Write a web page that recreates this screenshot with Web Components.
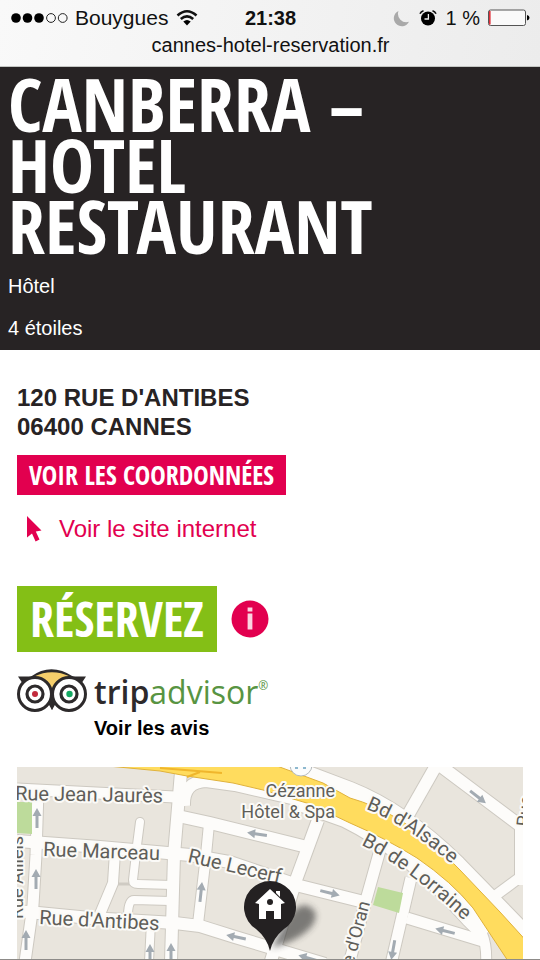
<!DOCTYPE html>
<html lang="fr">
<head>
<meta charset="utf-8">
<meta name="viewport" content="width=device-width, initial-scale=1">
<title>Canberra - Hotel Restaurant</title>
<style>
  :root {
    --dark: #272324;
    --pink: #e2004f;
    --green: #84bf16;
    --condensed: 'Open Sans Condensed', 'Liberation Sans Narrow', sans-serif;
  }

  body {
    margin: 0;
    background: #fff;
    color: var(--dark);
    font-family: 'Liberation Sans', Arial, sans-serif;
  }
</style>
</head>
<body>
<hotel-page>
  <status-bar slot="status" carrier="Bouygues" time="21:38" battery="1 %">cannes-hotel-reservation.fr</status-bar>
  <hotel-header slot="header">
    Canberra – Hotel Restaurant
    <span slot="type">Hôtel</span>
    <span slot="stars">4 étoiles</span>
  </hotel-header>
  <hotel-contact>
    <span slot="street">120 rue d'Antibes</span>
    <span slot="city">06400 Cannes</span>
  </hotel-contact>
  <hotel-booking>Réservez</hotel-booking>
  <trip-advisor>Voir les avis</trip-advisor>
  <hotel-map slot="map"></hotel-map>
</hotel-page>

<script>
class BaseElement extends HTMLElement {
  constructor() {
    super();
    this.attachShadow({ mode: 'open' });
  }

  connectedCallback() {
    this.shadowRoot.innerHTML = this.render();
  }
}

class HotelPage extends BaseElement {
  render() {
    return `
      <style>
        :host {
          display: flex;
          flex-direction: column;
          box-sizing: border-box;
          min-height: 100vh;
          border-bottom: 1px solid #8d8b88;
        }

        main {
          flex: 1;
          display: flex;
          flex-direction: column;
          padding: 33px 17px 0;
        }
      </style>
      <slot name="status"></slot>
      <slot name="header"></slot>
      <main>
        <slot></slot>
        <slot name="map"></slot>
      </main>
    `;
  }
}

class StatusBar extends BaseElement {
  render() {
    return `
      <style>
        :host {
          display: block;
          height: 67px;
          box-sizing: border-box;
          padding: 6px 10px 0 11px;
          border-bottom: 1px solid #c4c6c3;
          background: linear-gradient(100deg, #f9f9f9, #ececec);
          color: #111;
          font-size: 20px;
          line-height: 24px;
        }

        .row {
          display: grid;
          grid-template-columns: 1fr auto 1fr;
          align-items: center;
        }

        .left, .right {
          display: flex;
          align-items: center;
          gap: 8px;
        }

        .left { font-size: 21px; gap: 7px; }
        .right { justify-content: flex-end; }
        .url { text-align: center; padding-top: 3px; }
        svg { display: block; flex: none; }
      </style>
      <div class="row">
        <div class="left">
          <svg width="57" height="12" viewBox="0 0 57 12">
            <circle cx="5" cy="6" r="4.8"/><circle cx="16.5" cy="6" r="4.8"/><circle cx="28" cy="6" r="4.8"/>
            <g fill="none" stroke="#222"><circle cx="40" cy="6" r="4.4"/><circle cx="51.7" cy="6" r="4.4"/></g>
          </svg>
          <span>${this.getAttribute('carrier')}</span>
          <svg width="24" height="18" viewBox="0 0 24 18">
            <g fill="none" stroke="#111" stroke-width="2.6">
              <path d="M2.5 6.5 Q12 -2 21.5 6.5"/>
              <path d="M5.8 10 Q12 4.6 18.2 10"/>
            </g>
            <path d="M8.3 12.5 Q12 9.5 15.7 12.5 L12 16.5 Z"/>
          </svg>
        </div>
        <strong>${this.getAttribute('time')}</strong>
        <div class="right">
          <svg width="17" height="17" viewBox="0 0 17 17">
            <path d="M5.5 1 A8 8 0 1 0 16 11.8 A8.4 8.4 0 0 1 5.5 1 Z" fill="#a9a9a9"/>
          </svg>
          <svg width="20" height="18" viewBox="0 0 20 18">
            <circle cx="10" cy="9.5" r="7"/>
            <path d="M2 4.8 Q3 2.5 5.5 1.7 M18 4.8 Q17 2.5 14.5 1.7" fill="none" stroke="#111" stroke-width="1.6"/>
            <path d="M10.4 5 V10 H6.5" fill="none" stroke="#eee" stroke-width="1.3"/>
          </svg>
          <span>${this.getAttribute('battery')}</span>
          <svg width="42" height="18" viewBox="0 0 42 18">
            <rect x="0.5" y="1" width="37" height="15.5" rx="2" fill="#fafafa" stroke="#555"/>
            <rect x="1" y="2" width="1.6" height="13.5" fill="#e0303a"/>
            <path d="M39 6 Q41.5 6.5 41.5 8.8 Q41.5 11 39 11.5 Z"/>
          </svg>
        </div>
      </div>
      <div class="url"><slot></slot></div>
    `;
  }
}

class HotelHeader extends BaseElement {
  render() {
    return `
      <style>
        :host {
          display: block;
          padding: 6px 8px 1px;
          background: var(--dark);
          color: #fff;
        }

        h1 {
          max-width: 420px;
          margin: 0 0 9px;
          font-family: var(--condensed);
          font-size: 74px;
          font-weight: 700;
          line-height: 61px;
          text-transform: uppercase;
        }

        p {
          margin: 0;
          padding: 9px 0;
          font-size: 20px;
          line-height: 24px;
        }
      </style>
      <h1><slot></slot></h1>
      <p><slot name="type"></slot></p>
      <p><slot name="stars"></slot></p>
    `;
  }
}

class HotelContact extends BaseElement {
  render() {
    return `
      <style>
        :host { display: block; }

        address {
          font-size: 24px;
          font-style: normal;
          font-weight: 700;
          line-height: 29px;
          text-transform: uppercase;
        }

        address ::slotted(span) { display: block; }

        button {
          display: block;
          margin: 14px 0 18px;
          padding: 0 12px;
          border: 0;
          background: var(--pink);
          color: #fff;
          font-family: var(--condensed);
          font-size: 26px;
          font-weight: 700;
          line-height: 40px;
          text-transform: uppercase;
        }

        a {
          display: flex;
          align-items: center;
          gap: 16px;
          padding-left: 8px;
          color: var(--pink);
          font-size: 24px;
          line-height: 32px;
          text-decoration: none;
        }
      </style>
      <address><slot name="street"></slot><slot name="city"></slot></address>
      <button type="button">Voir les coordonnées</button>
      <a href="#site">
        <svg width="18" height="28" viewBox="0 0 18 28">
          <path d="M2 1 L16.5 15.5 L10.8 16.5 L14.5 24.5 L10.6 26.5 L7 18.5 L2 22.5 Z" fill="currentColor"/>
        </svg>
        Voir le site internet
      </a>
    `;
  }
}

class HotelBooking extends BaseElement {
  render() {
    return `
      <style>
        :host {
          display: flex;
          align-items: center;
          gap: 14px;
          padding: 41px 0 16px;
        }

        button {
          padding: 0;
          border: 0;
          background: none;
          color: #fff;
        }

        .book {
          padding: 0 13px;
          background: var(--green);
          font-family: var(--condensed);
          font-size: 48px;
          font-weight: 700;
          line-height: 66px;
          text-transform: uppercase;
        }

        svg { display: block; }
      </style>
      <button class="book" type="button"><slot></slot></button>
      <button type="button" aria-label="Informations">
        <svg width="38" height="38" viewBox="0 0 38 38">
          <circle cx="19" cy="19" r="18.5" fill="#e2004f"/>
          <path d="M16.6 7.5 h4.8 v4 h-4.8 Z M16.6 13.5 h4.8 v16 h-4.8 Z" fill="#fbd3e0"/>
        </svg>
      </button>
    `;
  }
}

class TripAdvisor extends BaseElement {
  render() {
    return `
      <style>
        :host {
          display: block;
          padding-bottom: 26px;
        }

        a {
          display: grid;
          grid-template-columns: 70px auto;
          justify-content: start;
          column-gap: 7px;
          color: #000;
          text-decoration: none;
        }

        svg { display: block; margin-top: 1px; }

        .logo {
          display: flex;
          color: #2d2a2b;
          font-family: 'Open Sans', sans-serif;
          font-size: 32px;
          line-height: 47px;
        }

        .logo span { font-weight: 600; }
        .logo b { color: #589442; font-weight: 500; }
        .logo small { color: #589442; font-size: 12px; line-height: 36px; }

        strong {
          grid-column: 2;
          font-size: 20px;
          line-height: 26px;
        }
      </style>
      <a href="#avis">
        <svg width="70" height="45" viewBox="0 0 70 45">
          <path d="M1 7.5 H14 Q34 -7 56 7.5 H69 L64 15 L54 30 L38 34 L35 41 L32 34 L18 32 L6 15 Z" fill="#2d2a2b"/>
          <path d="M17 7.5 Q35 -1 53 7.5 Q40 10 35 21 Q30 10 17 7.5 Z" fill="#f6cf6b"/>
          <g fill="#fff" stroke="#2d2a2b" stroke-width="3">
            <circle cx="18" cy="25" r="16.5"/><circle cx="52" cy="25" r="16.5"/>
          </g>
          <g fill="#fff" stroke="#2d2a2b" stroke-width="3.2">
            <circle cx="18" cy="25" r="8"/><circle cx="52" cy="25" r="8"/>
          </g>
          <path d="M31 34 L35 41 L39 34 L35 28 Z" fill="#2d2a2b"/>
          <circle cx="18" cy="25" r="3" fill="#c22a3c"/>
          <circle cx="52.5" cy="25" r="3.2" fill="#14a862"/>
        </svg>
        <span class="logo"><span>trip</span><b>advisor</b><small>®</small></span>
        <strong><slot></slot></strong>
      </a>
    `;
  }
}

class HotelMap extends BaseElement {
  render() {
    // streets are drawn twice: grey edge first, then the road surface
    const streets = `
      <path d="M17 789 L175 797" stroke-width="11"/>
      <path d="M38 790 L36 855 L33 905 L25 962" stroke-width="11"/>
      <path d="M17 841 L100 847 L190 855 L230 862 L300 886 L364 902" stroke-width="12"/>
      <path d="M140 822 L137 845 L133 880 Q133 884 138 884 L172 885" stroke-width="8" stroke-linecap="round"/>
      <path d="M115 852 L113 883 L100 914" stroke-width="10"/>
      <path d="M170 901 L134 900 Q128 900 128 916" stroke-width="8"/>
      <path d="M17 911 L90 918 L175 923 L200 926 L235 937 L325 964" stroke-width="12"/>
      <path d="M151 922 L149 962" stroke-width="8"/>
      <path d="M181 772 L174 855 L171 962" stroke-width="12"/>
      <path d="M178 816 L210 823 L307 847" stroke-width="12"/>
      <path d="M209 824 L206 855 L198 924" stroke-width="10"/>
      <path d="M318 820 L296 880 L270 964" stroke-width="12"/>
      <path d="M184 806 Q183 782 206 781 L235 785 L300 800 L345 818" stroke-width="12"/>
      <path d="M380 850 L366 900 L349 964" stroke-width="11"/>
      <path d="M411 878 L391 964" stroke-width="11"/>
      <path d="M407 918 L486 942" stroke-width="11"/>
      <path d="M470 918 Q488 932 486 964" stroke-width="10"/>
      <path d="M437 764 L408 815" stroke-width="12"/>
      <path d="M430 758 L482 797 L518 824 L530 824" stroke-width="12"/>
      <path d="M521 820 L521 885" stroke-width="12"/>
      <path d="M530 870 L492 898" stroke-width="10"/>
      <path d="M276 763 L350 791 Q403 812 457 865 L530 940" stroke-width="18"/>
      <path d="M300 802 L345 818 Q410 850 470 918 L486 934" stroke-width="18"/>`;
    const edges = streets.replace(/stroke-width="(\d+)"/g, (match, width) => `stroke-width="${Number(width) + 2}"`);
    const arrow = (x, y, angle) => `
      <path transform="translate(${x} ${y}) rotate(${angle})" d="M-10 -1.5 H2 V-4.5 L10 0 L2 4.5 V1.5 H-10 Z"/>`;

    return `
      <style>
        :host {
          flex: 1;
          display: grid;
          min-height: 192px;
        }

        svg {
          width: 100%;
          height: 100%;
          font-family: Roboto, sans-serif;
        }

        text {
          fill: #5f5e59;
          stroke: #fbfaf7;
          stroke-width: 4px;
          stroke-linejoin: round;
          paint-order: stroke;
        }

        .street { font-size: 20px; }
        .small { font-size: 18px; }
      </style>
      <svg viewBox="17 767 506 192" preserveAspectRatio="xMidYMin slice" role="img" aria-label="Plan du quartier">
        <defs>
          <filter id="soft" x="-50%" y="-50%" width="200%" height="200%"><feGaussianBlur stdDeviation="3"/></filter>
          <path id="alsace" d="M366 809 Q412 827 465 876"/>
          <path id="lorraine" d="M361 845 Q413 870 478 934"/>
        </defs>
        <rect x="17" y="767" width="506" height="193" fill="#e9e5dd"/>
        <path d="M118 884 H132" stroke="#cfcbc3" stroke-width="3"/>
        <g fill="none" stroke="#cdc9c1">${edges}</g>
        <g fill="none" stroke="#fdfcfa">${streets}</g>
        <path d="M17 802 H32 V834 L17 833 Z M378 887 L403 893 L399 913 L373 905 Z" fill="#bddb9b"/>

        <path d="M108 766 L160 771 L187 776 L233 783 L263 790 L310 804 L350 823 Q385 838 417 858 Q452 882 473 908 L510 964 H530 V945 L500 912 L460 870 Q430 838 400 820 Q375 805 350 798 L323 783 L277 766 Z" fill="#ffdc5e" stroke="#e0b23c"/>
        <path d="M160 768 L222 773 M187 777 L200 772" stroke="#f0b62c" stroke-width="2" fill="none"/>
        <circle cx="301" cy="765" r="11" fill="#fbfcfc" stroke="#b3b9bc"/>
        <path d="M295 768 h3 M303 768 h3" stroke="#8db8cf" stroke-width="2"/>

        <g fill="#a3abb2">
          ${arrow(37, 818, -90)}${arrow(36, 879, -90)}${arrow(26, 940, -90)}
          ${arrow(150, 954, -90)}${arrow(171, 953, -90)}${arrow(201, 892, -84)}
          ${arrow(257, 834, 188)}${arrow(330, 893, 14)}${arrow(236, 937, 192)}
          ${arrow(308, 958, 196)}${arrow(445, 931, 194)}${arrow(393, 950, 100)}
          ${arrow(478, 797, 38)}
        </g>

        <g class="street">
          <text x="15" y="800" transform="rotate(1 15 800)">Rue Jean Jaurès</text>
          <text x="43" y="856" transform="rotate(2 43 856)">Rue Marceau</text>
          <text x="39" y="924" transform="rotate(3 39 924)">Rue d'Antibes</text>
          <text x="187" y="862" transform="rotate(13 187 862)">Rue Lecerf</text>
          <text><textPath href="#alsace">Bd d'Alsace</textPath></text>
          <text><textPath href="#lorraine">Bd de Lorraine</textPath></text>
        </g>
        <g class="small">
          <text x="23" y="919" transform="rotate(-90 23 919)">Rue Alliéis</text>
          <text x="370" y="903" text-anchor="end" transform="rotate(-75 370 903)">Rue d'Oran</text>
          <text x="529" y="827" transform="rotate(-84 529 827)">Rue</text>
          <g text-anchor="end">
            <text x="335" y="797">Cézanne</text>
            <text x="335" y="818">Hôtel &amp; Spa</text>
          </g>
        </g>

        <path d="M272 948 Q290 905 305 905 Q322 910 312 926 Q300 940 272 948 Z" fill="#333" opacity="0.6" filter="url(#soft)"/>
        <path d="M270 951 Q267 938 256 929 A26 26 0 1 1 284 929 Q273 938 270 951 Z" fill="#242122"/>
        <path d="M270 889 L285 903 L281 904 V919 H274 V911 H266 V919 H259 V904 L255 903 Z M276 891 h4 v6 l-4 -4 Z" fill="#fff"/>
        <circle cx="270" cy="902" r="3" fill="#242122"/>
      </svg>
    `;
  }
}

customElements.define('status-bar', StatusBar);
customElements.define('hotel-header', HotelHeader);
customElements.define('hotel-contact', HotelContact);
customElements.define('hotel-booking', HotelBooking);
customElements.define('trip-advisor', TripAdvisor);
customElements.define('hotel-map', HotelMap);
customElements.define('hotel-page', HotelPage);
</script>
</body>
</html>
